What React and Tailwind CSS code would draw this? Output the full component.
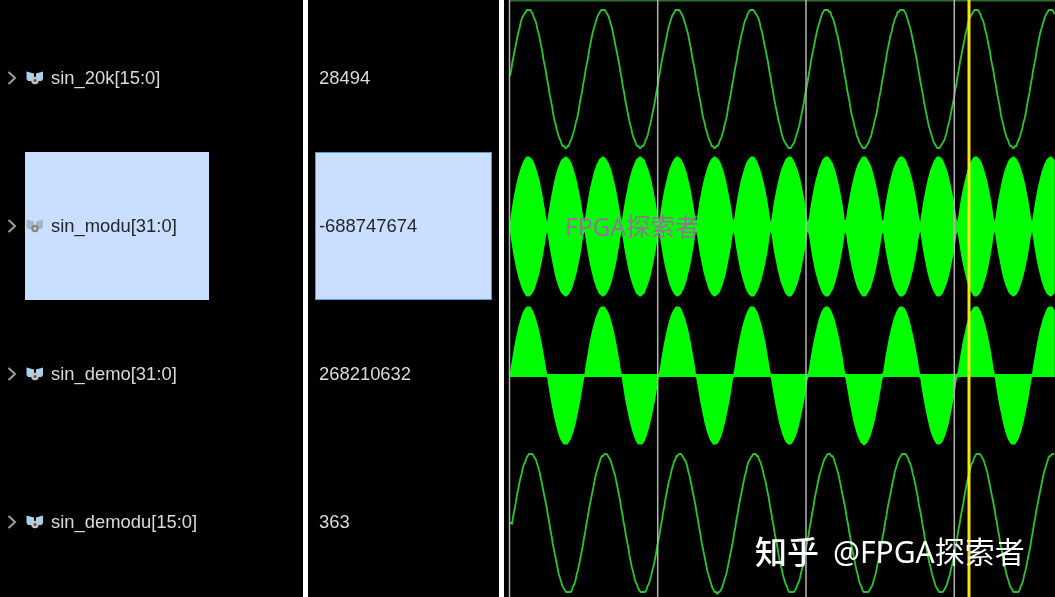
const P = 74.6;
const L = 510, R = 1055;
const w = (x, peak) => Math.cos((2 * Math.PI * (x - peak)) / P);

function stair(cy, amp, peak, start) {
  let d = start ? `M${L} ${start}H${L + 2}` : "";
  const step = 1.2;
  for (let x = start ? L + 2 : L; x <= R; x += step) {
    const y = cy - amp * w(x, peak);
    const q = Math.round(y / 2) * 2;
    d += (d ? "L" : "M") + x.toFixed(1) + " " + q.toFixed(1);
  }
  return d;
}

function lens(cy, amp, peak, min) {
  let top = "", bot = [];
  const step = 1.2;
  for (let x = L; x <= R; x += step) {
    const a = Math.max(min, amp * Math.pow(Math.abs(w(x, peak)), 0.8));
    const q = Math.round(a);
    top += (top ? "L" : "M") + x.toFixed(1) + " " + (cy - q);
    bot.unshift("L" + x.toFixed(1) + " " + (cy + q));
  }
  return top + bot.join("") + "Z";
}

function demo(cy, amp, peak, min) {
  let top = "", bot = [];
  const step = 1.2;
  for (let x = L; x <= R; x += step) {
    const c = w(x, peak);
    const v = amp * Math.sign(c) * Math.pow(Math.abs(c), 0.9);
    const t = Math.max(min, Math.round(v));
    const b = Math.max(min, Math.round(-v));
    top += (top ? "L" : "M") + x.toFixed(1) + " " + (cy - t);
    bot.unshift("L" + x.toFixed(1) + " " + (cy + b));
  }
  return top + bot.join("") + "Z";
}

const rows = [
  { name: "sin_20k[15:0]", value: "28494" },
  { name: "sin_modu[31:0]", value: "-688747674", selected: true },
  { name: "sin_demo[31:0]", value: "268210632" },
  { name: "sin_demodu[15:0]", value: "363" },
];

function BusIcon({ selected }) {
  const fill = selected ? "#a3b7c2" : "#a8d2ea";
  return (
    <svg width="18" height="16" viewBox="0 0 18 16" className="shrink-0">
      <path d="M0.5 1.5 L8 3.5 V11 H2 L0.5 9Z" fill={fill} />
      <path d="M17 1.5 L10 3.5 V11 H15.5 L17 9Z" fill={fill} />
      <circle cx="9" cy="10.5" r="3.8" fill={selected ? "#85877e" : "#c4c4c0"} />
      <circle cx="9" cy="10.5" r="1.5" fill={selected ? "#c9cfd2" : "#55555a"} />
    </svg>
  );
}

function Chevron() {
  return (
    <svg width="10" height="14" viewBox="0 0 10 14" className="shrink-0">
      <path d="M1.5 1 L8 7 L1.5 13" fill="none" stroke="#9c9c9c" strokeWidth="2" />
    </svg>
  );
}

function Waves() {
  return (
    <svg viewBox="504 0 551 597" className="block h-full w-full">
      <rect x="510" y="0" width="545" height="1.5" fill="#2f6a2f" />
      <path d={stair(78.5, 69, 528.3)} fill="none" stroke="#2cc42c" strokeWidth="1.8" strokeLinejoin="round" />
      <path d={lens(226.5, 70, 528.3, 5)} fill="#00ff00" />
      <path d={demo(375.5, 69.5, 528.3, 1.5)} fill="#00ff00" />
      <path d={stair(523.5, 69.5, 530.7, 523)} fill="none" stroke="#2cc42c" strokeWidth="1.8" strokeLinejoin="round" />
      {[509.5, 657.7, 806, 954.3].map((x) => (
        <rect key={x} x={x - 0.75} y="0" width="1.5" height="597" fill="#b4b4b4" />
      ))}
      <rect x="967.5" y="0" width="3" height="597" fill="#f5e613" />
    </svg>
  );
}

export default function App() {
  return (
    <div className="relative flex h-[597px] w-[1055px] overflow-hidden bg-black font-['Liberation_Sans',Arial,sans-serif] text-[18.4px] blur-[0.5px]">
      <div className="grid w-[303px] shrink-0 grid-rows-[repeat(4,148px)] pt-1">
        {rows.map((r) => (
          <div key={r.name} className="flex items-center pl-[7px]">
            <div className="w-[18px]"><Chevron /></div>
            <div className={`flex h-full w-[184px] items-center gap-[7px] pl-[1px] ${r.selected ? "bg-[#cadfff] text-[#22252c]" : "text-[#dadada]"}`}>
              <BusIcon selected={r.selected} />
              <span className="whitespace-nowrap">{r.name}</span>
            </div>
          </div>
        ))}
      </div>
      <div className="w-[5px] shrink-0 bg-white" />
      <div className="grid w-[191px] shrink-0 grid-rows-[repeat(4,148px)] pt-1">
        {rows.map((r) => (
          <div key={r.name} className="flex items-center pl-[7px]">
            <div className={`flex h-full w-[177px] items-center ${r.selected ? "border border-[#5f97c8] bg-[#cadfff] pl-[3px] text-[#22252c]" : "pl-[4px] text-[#dadada]"}`}>
              {r.value}
            </div>
          </div>
        ))}
      </div>
      <div className="w-[5px] shrink-0 bg-white" />
      <div className="min-w-0 flex-1">
        <Waves />
      </div>
      <span className="absolute left-[565px] top-[209px] font-['Noto_Sans','Noto_Sans_CJK_SC',sans-serif] text-[24.5px] leading-[36px] text-[#9a6e9e]">
        FPGA探索者
      </span>
      <div className="absolute left-[755px] top-[531px] flex items-center gap-[14px] whitespace-nowrap font-['Noto_Sans','Noto_Sans_CJK_SC',sans-serif] leading-[42px] text-white">
        <span className="text-[32px] font-medium">知乎</span>
        <span className="text-[30px]">@FPGA探索者</span>
      </div>
    </div>
  );
}
